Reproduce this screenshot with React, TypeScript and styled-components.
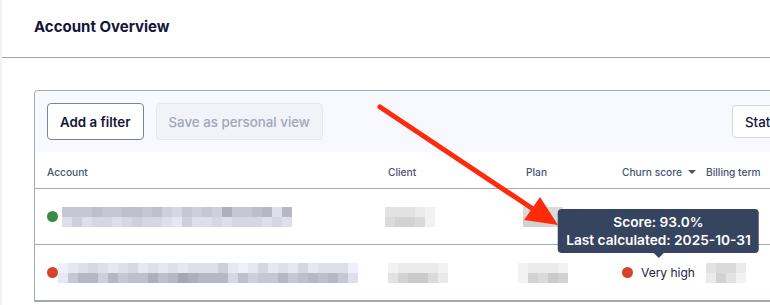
import React from 'react';
import styled, { createGlobalStyle } from 'styled-components';

const GlobalStyle = createGlobalStyle`
  html, body {
    margin: 0;
    padding: 0;
    background: #ffffff;
  }
  body {
    font-family: Inter, Roboto, 'Noto Sans', sans-serif;
    color: #14163a;
  }
`;

type Tone = 'blue' | 'gray';

// each char is a lightness level 0 (dark) .. 9 (light), one per pixel block
const toColor = (ch: string, tone: Tone) => {
  const l = 170 + parseInt(ch, 10) * 8;
  return tone === 'blue'
    ? `rgb(${l - 4}, ${l - 3}, ${Math.min(255, l + 8)})`
    : `rgb(${l}, ${l}, ${l})`;
};

const Pixelated = ({
  top,
  bottom,
  tone,
}: {
  top: string;
  bottom: string;
  tone: Tone;
}) => (
  <BlurBox>
    {[top, bottom].map((line, i) => (
      <BlurLine key={i}>
        {line.split('').map((ch, j) => (
          <BlurCell key={j} $bg={toColor(ch, tone)} />
        ))}
      </BlurLine>
    ))}
  </BlurBox>
);

const App = () => {
  return (
    <>
      <GlobalStyle />
      <Page>
        <SideEdge />
        <Main>
          <Header>
            <Title>Account Overview</Title>
          </Header>
          <Content>
            <Card>
              <Toolbar>
                <Button>Add a filter</Button>
                <Button disabled>Save as personal view</Button>
                <Spacer />
                <SmallButton>Status</SmallButton>
              </Toolbar>
              <HeadRow>
                <HeadCell>Account</HeadCell>
                <HeadCell>Client</HeadCell>
                <HeadCell>Plan</HeadCell>
                <HeadCell>
                  Churn score
                  <SortCaret />
                </HeadCell>
                <HeadCell>Billing term</HeadCell>
              </HeadRow>

              <Row>
                <Cell>
                  <Dot $color="#3b8a40" />
                  <Indent $px={4}>
                    <Pixelated
                      tone="blue"
                      top="44434433435645451443272"
                      bottom="75766765667857767666767"
                    />
                  </Indent>
                </Cell>
                <Cell $shift={-3}>
                  <Pixelated tone="gray" top="77789" bottom="65569" />
                </Cell>
                <Cell $shift={-3}>
                  <Pixelated tone="gray" top="6666" bottom="5556" />
                </Cell>
                <Cell />
                <Cell />
              </Row>

              <Row>
                <Cell>
                  <Dot $color="#d5432a" />
                  <Pixelated
                    tone="blue"
                    top="987678768787877758986878687779"
                    bottom="842252433132012226354424323247"
                  />
                </Cell>
                <Cell>
                  <Pixelated tone="gray" top="988889" bottom="754468" />
                </Cell>
                <Cell $shift={-8}>
                  <Pixelated tone="gray" top="98889" bottom="95645" />
                </Cell>
                <Cell>
                  <Badge>
                    <Dot $color="#d5432a" />
                    Very high
                    <Tooltip>
                      <div>Score: 93.0%</div>
                      <div>Last calculated: 2025-10-31</div>
                    </Tooltip>
                  </Badge>
                </Cell>
                <Cell>
                  <Pixelated tone="gray" top="7668" bottom="8579" />
                </Cell>
              </Row>
            </Card>
          </Content>
        </Main>

        <Overlay width="770" height="305" viewBox="0 0 770 305">
          <line
            x1="380"
            y1="107"
            x2="536"
            y2="211"
            stroke="#fd2b0b"
            strokeWidth="5"
            strokeLinecap="round"
          />
          <polygon points="558,225 524,220 540,197" fill="#fd2b0b" />
        </Overlay>
      </Page>
    </>
  );
};

export default App;

const Page = styled.div`
  position: relative;
  display: flex;
  width: 770px;
  height: 305px;
  overflow: hidden;
`;

const SideEdge = styled.div`
  width: 2px;
  flex-shrink: 0;
  background: #f1f1f3;
`;

const Main = styled.div`
  flex: 1;
  min-width: 0;
`;

const Header = styled.div`
  height: 58px;
  box-sizing: border-box;
  padding: 17px 0 0 32px;
  border-bottom: 1px solid #9ea5b0;
`;

const Title = styled.h1`
  margin: 0;
  font-size: 15px;
  font-weight: 700;
  line-height: 20px;
  color: #13153a;
`;

const Content = styled.div`
  padding: 32px 0 0 32px;
`;

const Card = styled.div`
  width: 789px;
  border: 1px solid #a4aab5;
  border-right: none;
  border-radius: 4px 0 0 0;
  overflow: hidden;
`;

const Toolbar = styled.div`
  display: flex;
  align-items: center;
  gap: 12px;
  height: 61px;
  box-sizing: border-box;
  padding: 0 12px;
  background: #f8f9fe;
`;

const Spacer = styled.div`
  flex: 1;
`;

const Button = styled.button`
  height: 37px;
  padding: 0 12px;
  border: 1px solid #7d8392;
  border-radius: 4px;
  background: #ffffff;
  font-family: inherit;
  font-size: 13.3px;
  font-weight: 600;
  color: #13153a;

  &:disabled {
    border-color: #e5e7ee;
    background: #f2f3f8;
    color: #a2a6bb;
    font-weight: 500;
  }
`;

const SmallButton = styled(Button)`
  height: 33px;
  width: 80px;
  text-align: left;
  border-color: #d3d6de;
  font-weight: 500;
`;

const columns = '341px 138px 96px 84px 1fr';

const HeadRow = styled.div`
  display: grid;
  grid-template-columns: ${columns};
  align-items: center;
  height: 37px;
  box-sizing: border-box;
  padding: 3px 0 0 12px;
  border-bottom: 1px solid #a4aab5;
`;

const HeadCell = styled.div`
  display: flex;
  align-items: center;
  font-size: 10.2px;
  font-weight: 500;
  color: #4a5370;
`;

const SortCaret = styled.span`
  margin-left: 6px;
  width: 0;
  height: 0;
  border-left: 4px solid transparent;
  border-right: 4px solid transparent;
  border-top: 4px solid #4a5370;
`;

const Row = styled.div`
  display: grid;
  grid-template-columns: ${columns};
  align-items: center;
  height: 56px;
  box-sizing: border-box;
  padding-left: 12px;
  border-bottom: 1px solid #a4aab5;
`;

const Cell = styled.div<{ $shift?: number }>`
  display: flex;
  align-items: center;
  margin-left: ${({ $shift }) => $shift ?? 0}px;
`;

const Indent = styled.div<{ $px: number }>`
  margin-left: ${({ $px }) => $px}px;
`;

const Dot = styled.span<{ $color: string }>`
  display: inline-block;
  width: 11px;
  height: 11px;
  border-radius: 50%;
  background: ${({ $color }) => $color};
  flex-shrink: 0;
`;

const BlurBox = styled.div`
  display: flex;
  flex-direction: column;
`;

const BlurLine = styled.div`
  display: flex;
`;

const BlurCell = styled.span<{ $bg: string }>`
  width: 10px;
  height: 10px;
  background: ${({ $bg }) => $bg};
`;

const Badge = styled.div`
  position: relative;
  display: flex;
  align-items: center;
  gap: 8px;
  font-size: 12px;
  color: #1b2141;
`;

const Tooltip = styled.div`
  position: absolute;
  left: 50%;
  bottom: calc(100% + 12px);
  transform: translateX(-50%);
  padding: 4px 8px;
  border-radius: 4px;
  background: #36445f;
  color: #ffffff;
  font-size: 13.7px;
  font-weight: 600;
  line-height: 18px;
  text-align: center;
  white-space: nowrap;

  &::after {
    content: '';
    position: absolute;
    top: 100%;
    left: 50%;
    margin-left: -5px;
    border-left: 5px solid transparent;
    border-right: 5px solid transparent;
    border-top: 5px solid #36445f;
  }
`;

const Overlay = styled.svg`
  position: absolute;
  left: 0;
  top: 0;
  pointer-events: none;
`;
